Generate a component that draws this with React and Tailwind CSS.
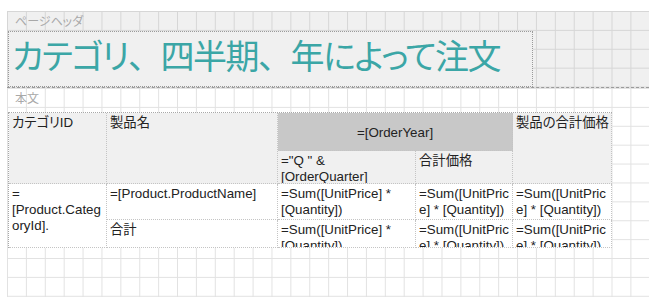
export default function App() {
  const font = "font-['Liberation_Sans','Noto_Sans_CJK_JP',sans-serif]";
  const cell = "border-r border-b border-dotted border-[#c4c4c4] px-[3px] pt-[2px] overflow-hidden whitespace-nowrap text-[13.33px] leading-[16px] text-[#222] [font-feature-settings:'palt']";
  const comma = "[font-feature-settings:normal]";
  return (
    <div className={`w-[649px] h-[297px] overflow-hidden bg-white pt-[11px] pl-[7px] flex flex-col ${font}`}>
      {/* Page header */}
      <div className="h-[77px] shrink-0 border-b border-dashed border-[#9a9a9a] bg-[#f0f0f0] bg-[linear-gradient(to_right,#d6d6d6_1px,transparent_1px),linear-gradient(to_bottom,#d6d6d6_1px,transparent_1px)] bg-[size:18.9px_18.9px] flex flex-col">
        <div className="h-[20px] pl-[8px] pt-[2px] text-[12px] leading-[16px] text-[#a8a8a8] font-['Noto_Sans_CJK_JP',sans-serif] [font-feature-settings:'palt']">
          ページヘッダ
        </div>
        <div className="ml-[1px] w-[525px] h-[56px] border border-dotted border-[#9a9a9a] bg-[#f0f0f0] pl-[3px] pt-[2px] text-[34px] leading-[42px] tracking-[-1.5px] text-[#3ba6a6] font-['Noto_Sans_CJK_JP',sans-serif] [font-feature-settings:'palt'] whitespace-nowrap overflow-hidden">
          カテゴリ<span className={comma}>、</span>四半期<span className={comma}>、</span>年によって注文
        </div>
      </div>
      {/* Body */}
      <div className="flex-1 bg-white bg-[linear-gradient(to_right,#e2e2e2_1px,transparent_1px),linear-gradient(to_bottom,#e2e2e2_1px,transparent_1px)] bg-[size:18.9px_18.9px] flex flex-col">
        <div className="h-[24px] pl-[8px] pt-[2px] text-[12px] leading-[16px] text-[#a8a8a8] font-['Noto_Sans_CJK_JP',sans-serif]">
          本文
        </div>
        <div className="ml-[1px] w-[604px] grid grid-cols-[98px_171px_138px_97px_99px] grid-rows-[38px_33px_36px_28px] border-t border-l border-dotted border-[#a8a8a8]">
          <div className={`${cell} row-span-2 bg-[#f0f0f0]`}>カテゴリID</div>
          <div className={`${cell} row-span-2 bg-[#f0f0f0]`}>製品名</div>
          <div className={`${cell} col-span-2 bg-[#c8c8c8] flex items-center justify-center pt-0`}>=[OrderYear]</div>
          <div className={`${cell} row-span-2 bg-[#f0f0f0]`}>製品の合計価格</div>
          <div className={`${cell} bg-[#f0f0f0]`}>="Q " &amp;<br />[OrderQuarter]</div>
          <div className={`${cell} bg-[#f0f0f0]`}>合計価格</div>

          <div className={`${cell} row-span-2 bg-white`}>=<br />[Product.Categ<br />oryId].</div>
          <div className={`${cell} bg-white`}>=[Product.ProductName]</div>
          <div className={`${cell} bg-white`}>=Sum([UnitPrice] *<br />[Quantity])</div>
          <div className={`${cell} bg-white`}>=Sum([UnitPric<br />e] * [Quantity])</div>
          <div className={`${cell} bg-white`}>=Sum([UnitPric<br />e] * [Quantity])</div>

          <div className={`${cell} bg-white`}>合計</div>
          <div className={`${cell} bg-white`}>=Sum([UnitPrice] *<br />[Quantity])</div>
          <div className={`${cell} bg-white`}>=Sum([UnitPric<br />e] * [Quantity])</div>
          <div className={`${cell} bg-white`}>=Sum([UnitPric<br />e] * [Quantity])</div>
        </div>
      </div>
    </div>
  );
}
